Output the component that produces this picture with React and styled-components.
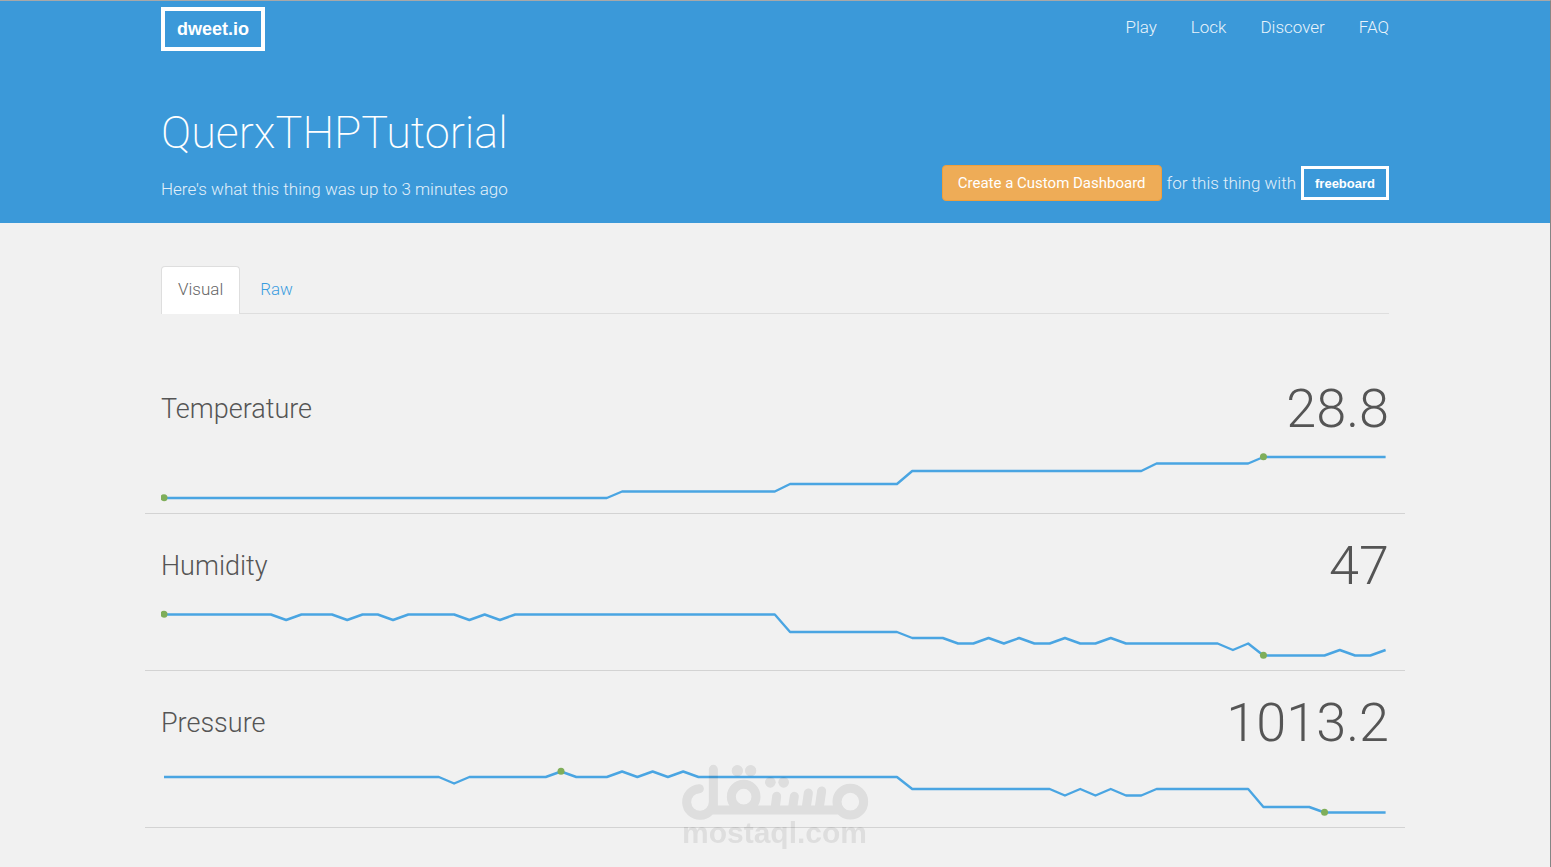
import React from "react";
import styled, { createGlobalStyle } from "styled-components";

const GlobalStyle = createGlobalStyle`
  *, *::before, *::after { box-sizing: border-box; }
  body {
    margin: 0;
    background: #f1f1f1;
    color: #555;
    font-family: Roboto, "Liberation Sans", sans-serif;
    font-size: 17px;
    font-weight: 300;
    line-height: 24px;
  }
  h1, h2, p { margin: 0; font-weight: 300; }
`;

const Page = styled.div`
  min-height: 100vh;
  border-top: 1px solid #a8a8a8;
  border-right: 1px solid #858585;
`;

const Container = styled.div`
  width: 100%;
  max-width: 1260px;
  margin: 0 auto;
  padding: 0 ${(p) => (p.$flush ? 0 : 16)}px;
`;

const Header = styled.header`
  background: #3b99d9;
  color: #fff;
  padding: 6px 0 20px;
`;

const TopBar = styled.div`
  display: flex;
  align-items: center;
  justify-content: space-between;
`;

const Logo = styled.a`
  display: inline-flex;
  align-items: center;
  justify-content: center;
  width: ${(p) => (p.$small ? 88 : 104)}px;
  height: ${(p) => (p.$small ? 34 : 44)}px;
  border: ${(p) => (p.$small ? 3 : 4)}px solid #fff;
  color: #fff;
  font: bold ${(p) => (p.$small ? 13 : 18)}px "Liberation Sans", Arial, sans-serif;
  text-decoration: none;
`;

const Nav = styled.nav`
  display: flex;
  gap: 34px;
  padding-bottom: 4px;
`;

const NavLink = styled.a`
  color: #e9f4fb;
  text-decoration: none;
`;

const Hero = styled.div`
  display: flex;
  align-items: flex-end;
  justify-content: space-between;
  margin-top: 50px;
`;

const ThingName = styled.h1`
  font-size: 45px;
  font-weight: 200;
  line-height: 64px;
`;

const Status = styled.p`
  margin-top: 12px;
  padding-bottom: 2px;
  color: #e2f0fa;
`;

const Promo = styled.div`
  display: flex;
  align-items: center;
  gap: 5px;
  padding-bottom: 2px;
  color: #e2f0fa;
`;

const DashboardButton = styled.button`
  height: 36px;
  padding: 0 15px;
  border: 1px solid #ee9f3c;
  border-radius: 4px;
  background: #eeac57;
  color: #fff;
  font: 400 15px Roboto, "Liberation Sans", sans-serif;
  cursor: pointer;
`;

const Tabs = styled.div`
  display: flex;
  gap: 3px;
  margin-top: 43px;
  border-bottom: 1px solid #dedede;
`;

const Tab = styled.button`
  height: 48px;
  margin-bottom: -1px;
  padding: 0 16px 4px;
  border: 1px solid ${(p) => (p.$active ? "#dedede" : "transparent")};
  border-bottom: 0;
  border-radius: 4px 4px 0 0;
  background: ${(p) => (p.$active ? "#fff" : "transparent")};
  color: ${(p) => (p.$active ? "#666" : "#3b9de0")};
  font: inherit;
  cursor: pointer;
`;

const Readings = styled.main`
  margin-top: 43px;
`;

const Reading = styled.section`
  padding: 20px 16px 8px;
  border-bottom: 1px solid #d3d3d3;
`;

const ReadingHead = styled.div`
  display: flex;
  align-items: center;
  justify-content: space-between;
  margin-bottom: 8px;
`;

const ReadingName = styled.h2`
  font-size: 27px;
  line-height: 32px;
`;

const ReadingValue = styled.span`
  font-size: 54px;
  line-height: 64px;
`;

const Chart = styled.svg`
  display: block;
  width: 100%;
  height: auto;
`;

const Watermark = styled.div`
  position: fixed;
  left: 50%;
  bottom: 22px;
  width: 188px;
  margin-left: -95px;
  opacity: 0.08;
  color: #000;
  pointer-events: none;
`;

const WatermarkMark = styled.svg`
  display: block;
  width: 188px;
  height: 58px;
`;

const WatermarkText = styled.div`
  font: bold 30px/24px "Liberation Sans", Arial, sans-serif;
  text-align: center;
`;

/* Each series lists its turning points as [sample index, y]. */
const readings = [
  {
    name: "Temperature",
    value: "28.8",
    marks: [0, 72],
    series: [[0, 49], [29, 49], [30, 42.5], [40, 42.5], [41, 35], [48, 35], [49, 22], [64, 22], [65, 14.5], [71, 14.5], [72, 8], [80, 8]],
  },
  {
    name: "Humidity",
    value: "47",
    marks: [0, 72],
    series: [
      [0, 8.5], [7, 8.5], [8, 14], [9, 8.5], [11, 8.5], [12, 14], [13, 8.5], [14, 8.5], [15, 14], [16, 8.5],
      [19, 8.5], [20, 14], [21, 8.5], [22, 14], [23, 8.5], [40, 8.5], [41, 26], [48, 26], [49, 32], [51, 32],
      [52, 37.5], [53, 37.5], [54, 32], [55, 37.5], [56, 32], [57, 37.5], [58, 37.5], [59, 32], [60, 37.5],
      [61, 37.5], [62, 32], [63, 37.5], [69, 37.5], [70, 44], [71, 37.5], [72, 49.5], [76, 49.5], [77, 44],
      [78, 49.5], [79, 49.5], [80, 44],
    ],
  },
  {
    name: "Pressure",
    value: "1013.2",
    marks: [26, 76],
    series: [
      [0, 14], [18, 14], [19, 20.5], [20, 14], [25, 14], [26, 8.5], [27, 14], [29, 14], [30, 8.5], [31, 14],
      [32, 8.5], [33, 14], [34, 8.5], [35, 14], [48, 14], [49, 26], [58, 26], [59, 32.5], [60, 26], [61, 32.5],
      [62, 26], [63, 32.5], [64, 32.5], [65, 26], [71, 26], [72, 44], [75, 44], [76, 49.5], [80, 49.5],
    ],
  },
];

const toX = (index) => 3 + index * 15.27;

function Sparkline({ name, series, marks }) {
  return (
    <Chart viewBox="0 0 1228 56" role="img" aria-label={name}>
      <polyline
        points={series.map(([i, y]) => `${toX(i)},${y}`).join(" ")}
        fill="none"
        stroke="#4aa5e2"
        strokeWidth="2.4"
        strokeLinejoin="round"
      />
      {series
        .filter(([i]) => marks.includes(i))
        .map(([i, y]) => (
          <circle key={i} cx={toX(i)} cy={y - 0.3} r="3.5" fill="#7fae5a" />
        ))}
    </Chart>
  );
}

export default function App() {
  return (
    <>
      <GlobalStyle />
      <Page>
        <Header>
          <Container>
            <TopBar>
              <Logo href="#">dweet.io</Logo>
              <Nav>
                <NavLink href="#play">Play</NavLink>
                <NavLink href="#lock">Lock</NavLink>
                <NavLink href="#discover">Discover</NavLink>
                <NavLink href="#faq">FAQ</NavLink>
              </Nav>
            </TopBar>
            <Hero>
              <div>
                <ThingName>QuerxTHPTutorial</ThingName>
                <Status>Here's what this thing was up to 3 minutes ago</Status>
              </div>
              <Promo>
                <DashboardButton type="button">Create a Custom Dashboard</DashboardButton>
                <span>for this thing with</span>
                <Logo $small href="#freeboard">freeboard</Logo>
              </Promo>
            </Hero>
          </Container>
        </Header>
        <Container>
          <Tabs role="tablist">
            <Tab type="button" role="tab" aria-selected="true" $active>Visual</Tab>
            <Tab type="button" role="tab" aria-selected="false">Raw</Tab>
          </Tabs>
        </Container>
        <Container $flush>
          <Readings>
            {readings.map((r) => (
              <Reading key={r.name}>
                <ReadingHead>
                  <ReadingName>{r.name}</ReadingName>
                  <ReadingValue>{r.value}</ReadingValue>
                </ReadingHead>
                <Sparkline {...r} />
              </Reading>
            ))}
          </Readings>
        </Container>
        <Watermark>
          <WatermarkMark viewBox="64 36 562 174" aria-hidden="true">
            <g fill="none" stroke="currentColor" strokeWidth="27" strokeLinecap="round" strokeLinejoin="round">
              <path d="M118 113A40 40 0 1 0 160 152M160 55V177H530" />
              <circle cx="251" cy="137" r="37" />
              <circle cx="571" cy="152" r="40" />
              <path d="M350 136L345 175M403 136L397 175M445 126L438 175M485 120L477 175" />
            </g>
            <g fill="currentColor">
              <circle cx="232" cy="59" r="17" />
              <circle cx="272" cy="59" r="17" />
              <circle cx="331" cy="94" r="16" />
              <circle cx="371" cy="94" r="16" />
            </g>
          </WatermarkMark>
          <WatermarkText>mostaql.com</WatermarkText>
        </Watermark>
      </Page>
    </>
  );
}
